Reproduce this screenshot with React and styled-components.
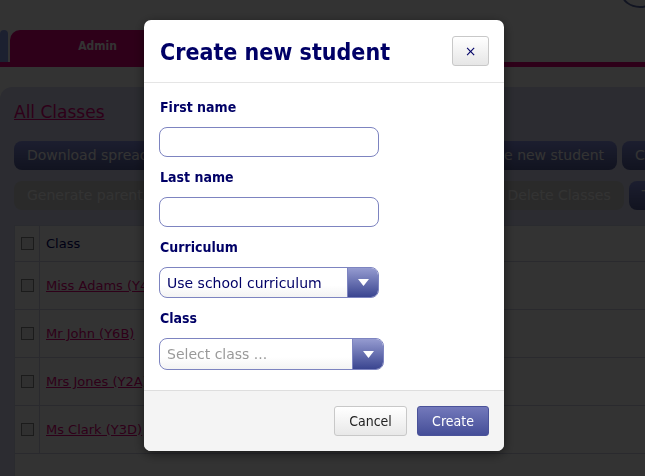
import React from 'react'
import styled, { createGlobalStyle } from 'styled-components'

const GlobalStyle = createGlobalStyle`
  html, body {
    margin: 0;
    padding: 0;
    background: #fff;
    font-family: "DejaVu Sans", Verdana, sans-serif;
    overflow: hidden;
  }
`

const Page = styled.div`
  width: 645px;
  height: 476px;
  overflow: hidden;
  background: #fff;
`

const TopBar = styled.div`
  height: 30px;
  position: relative;
`

const Avatar = styled.div`
  position: absolute;
  right: -14px;
  top: -22px;
  width: 34px;
  height: 26px;
  border-radius: 50%;
  border: 2px solid #5b6aa8;
  background: #fff;
`

const TabRow = styled.div`
  display: flex;
  gap: 2px;
  height: 32px;
  border-bottom: 5px solid #e6007d;
`

const Tab = styled.div`
  width: ${p => p.$width}px;
  background: ${p => p.$color};
  border-radius: 10px 10px 0 0;
  display: flex;
  align-items: center;
  justify-content: center;
  font-weight: bold;
  font-size: 12px;
  color: #fff;
  font-family: "DejaVu Sans Condensed", "DejaVu Sans", sans-serif;
`

const Panel = styled.div`
  margin-top: 20px;
  background: #d9dcf4;
  border-radius: 12px 0 0 0;
  padding: 15px 0 0 14px;
  height: 400px;
`

const HeadLink = styled.a`
  display: block;
  color: #e6007d;
  font-size: 17px;
  text-decoration: underline;
  margin-bottom: 19px;
`

const ButtonRow = styled.div`
  display: flex;
  gap: 5px;
  margin-bottom: 11px;
  white-space: nowrap;
`

const PageButton = styled.div`
  flex: none;
  height: 29px;
  line-height: 29px;
  padding: 0 13px;
  border-radius: 8px;
  font-size: 14px;
  color: #fff;
  background: ${p => p.$gray ? '#d0d0d0' : 'linear-gradient(#8c95ea, #56609c)'};
`

const Table = styled.div`
  margin-top: 15px;
  background: #fff;
  border-left: 1px solid #d2d4e8;
  border-top: 1px solid #d2d4e8;
  height: 300px;
`

const Row = styled.div`
  display: flex;
  height: ${p => p.$head ? 35 : 47}px;
  border-bottom: 1px solid #cfd2e6;
`

const CheckCell = styled.div`
  width: 24px;
  border-right: 1px solid #cfd2e6;
  display: flex;
  align-items: center;
  justify-content: center;
`

const Box = styled.div`
  width: 11px;
  height: 11px;
  border: 1px solid #888;
  background: #eee;
`

const ClassCell = styled.div`
  flex: 1;
  display: flex;
  align-items: center;
  padding-left: 6px;
  font-size: 13px;
  color: ${p => p.$head ? '#000066' : '#e6007d'};
  text-decoration: ${p => p.$head ? 'none' : 'underline'};
`

const Overlay = styled.div`
  position: fixed;
  inset: 0;
  background: rgba(0, 0, 0, 0.8);
`

const Modal = styled.div`
  position: absolute;
  left: 144px;
  top: 20px;
  width: 360px;
  background: #fff;
  border-radius: 7px;
  overflow: hidden;
  box-shadow: 0 3px 12px rgba(0, 0, 0, 0.5);
`

const ModalHeader = styled.div`
  height: 63px;
  display: flex;
  align-items: center;
  justify-content: space-between;
  padding: 2px 15px 0 16px;
  box-sizing: border-box;
  border-bottom: 1px solid #e5e5e5;
`

const Title = styled.h3`
  margin: 0;
  font-family: "DejaVu Sans Condensed", "DejaVu Sans", sans-serif;
  font-weight: bold;
  font-size: 23px;
  color: #000066;
`

const CloseButton = styled.button`
  width: 37px;
  height: 30px;
  margin-top: -2px;
  border: 1px solid #c8c8c8;
  border-radius: 3px;
  background: linear-gradient(#fff, #e6e6e6);
  color: #000066;
  font-size: 14px;
  line-height: 1;
  padding: 0;
  font-family: "DejaVu Sans", sans-serif;
`

const ModalBody = styled.div`
  padding: 15px 16px 20px 15px;
  display: flex;
  flex-direction: column;
  align-items: flex-start;
`

const Label = styled.label`
  font-family: "DejaVu Sans Condensed", "DejaVu Sans", sans-serif;
  font-weight: bold;
  font-size: 14px;
  line-height: 18px;
  color: #000066;
  margin: ${p => p.$first ? '0' : '11px'} 0 11px 1px;
`

const TextInput = styled.input`
  box-sizing: border-box;
  width: 220px;
  height: 30px;
  border: 1px solid #7d84c0;
  border-radius: 8px;
  background: #fff;
  outline: none;
`

const Select = styled.div`
  box-sizing: border-box;
  width: ${p => p.$width}px;
  height: ${p => p.$height}px;
  border: 1px solid #7d84c0;
  border-radius: 8px;
  display: flex;
  overflow: hidden;
  background: linear-gradient(#fff 60%, #f3f3f3);
`

const SelectText = styled.div`
  flex: 1;
  display: flex;
  align-items: center;
  padding-left: 7px;
  font-size: 14px;
  color: ${p => p.$placeholder ? '#999' : '#000066'};
  border-right: 1px solid #7d84c0;
`

const Arrow = styled.div`
  width: 30px;
  display: flex;
  align-items: center;
  justify-content: center;
  background: linear-gradient(#959bd0, #3a4590);
`

const ModalFooter = styled.div`
  background: #f4f4f4;
  border-top: 1px solid #dedede;
  height: 60px;
  display: flex;
  align-items: center;
  justify-content: flex-end;
  gap: 10px;
  padding-right: 15px;
`

const FooterButton = styled.button`
  height: 30px;
  width: ${p => p.$width}px;
  border-radius: 3px;
  font-family: "DejaVu Sans Condensed", "DejaVu Sans", sans-serif;
  font-size: 14px;
  padding: 0;
  border: 1px solid ${p => p.$primary ? '#4a5299' : '#c8c8c8'};
  color: ${p => p.$primary ? '#fff' : '#222'};
  background: ${p => p.$primary ? 'linear-gradient(#7379bb, #454e98)' : 'linear-gradient(#fff, #e8e8e8)'};
`

const ArrowIcon = () => (
  <svg width="11" height="7" viewBox="0 0 11 7">
    <path d="M0 0 L11 0 L5.5 7 Z" fill="#fff" />
  </svg>
)

const classes = ['Miss Adams (Y4A)', 'Mr John (Y6B)', 'Mrs Jones (Y2A)', 'Ms Clark (Y3D)']

const App = () => {
  return (
    <>
      <GlobalStyle />
      <Page>
        <TopBar>
          <Avatar />
        </TopBar>
        <TabRow>
          <Tab $width={8} $color="#8a9ef0" />
          <Tab $width={175} $color="#e6007d">Admin</Tab>
        </TabRow>
        <Panel>
          <HeadLink>All Classes</HeadLink>
          <ButtonRow>
            <PageButton>Download spreadsheet</PageButton>
            <PageButton>Upload students' spreadsheets</PageButton>
            <PageButton>Create new student</PageButton>
            <PageButton>Create new class</PageButton>
          </ButtonRow>
          <ButtonRow>
            <PageButton $gray>Generate parent letters</PageButton>
            <PageButton $gray>Print pupil login cards for each class</PageButton>
            <PageButton $gray>Delete Classes</PageButton>
            <PageButton>Transfer students</PageButton>
          </ButtonRow>
          <Table>
            <Row $head>
              <CheckCell><Box /></CheckCell>
              <ClassCell $head>Class</ClassCell>
            </Row>
            {classes.map(c => (
              <Row key={c}>
                <CheckCell><Box /></CheckCell>
                <ClassCell>{c}</ClassCell>
              </Row>
            ))}
          </Table>
        </Panel>
      </Page>
      <Overlay>
        <Modal>
          <ModalHeader>
            <Title>Create new student</Title>
            <CloseButton>×</CloseButton>
          </ModalHeader>
          <ModalBody>
            <Label $first>First name</Label>
            <TextInput />
            <Label>Last name</Label>
            <TextInput />
            <Label>Curriculum</Label>
            <Select $width={220} $height={31}>
              <SelectText>Use school curriculum</SelectText>
              <Arrow><ArrowIcon /></Arrow>
            </Select>
            <Label>Class</Label>
            <Select $width={225} $height={32}>
              <SelectText $placeholder>Select class ...</SelectText>
              <Arrow><ArrowIcon /></Arrow>
            </Select>
          </ModalBody>
          <ModalFooter>
            <FooterButton $width={73}>Cancel</FooterButton>
            <FooterButton $width={72} $primary>Create</FooterButton>
          </ModalFooter>
        </Modal>
      </Overlay>
    </>
  )
}

export default App
